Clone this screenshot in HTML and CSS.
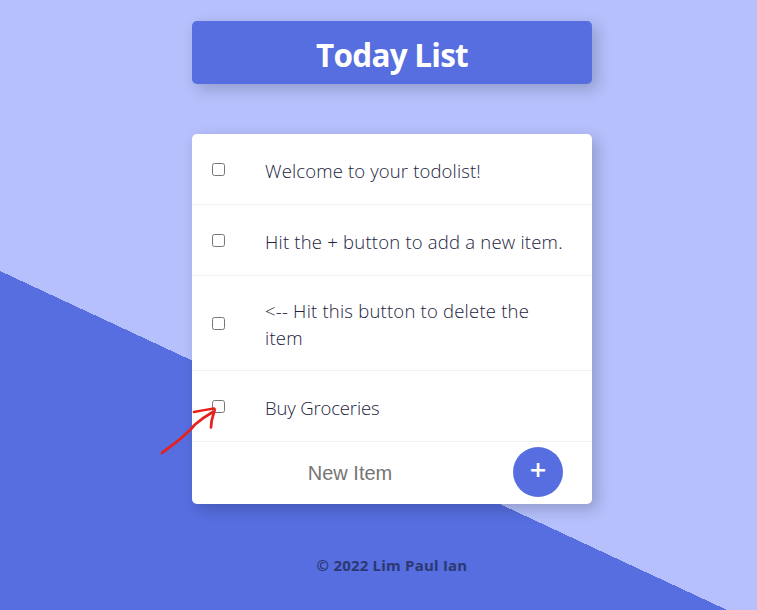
FILE: index.html
```html
<!DOCTYPE html>
<html lang="en">
<head>
<meta charset="utf-8">
<title>Today List</title>
<link rel="stylesheet" href="styles.css">
</head>
<body>
<header class="box heading"><h1>Today List</h1></header>
<main class="box list">
  <div class="item"><input type="checkbox"><p class="welcome">Welcome to your todolist!</p></div>
  <div class="item"><input type="checkbox"><p>Hit the + button to add a new item.</p></div>
  <div class="item tall"><input type="checkbox"><p>&lt;-- Hit this button to delete the<br>item</p></div>
  <div class="item"><input type="checkbox"><p class="short">Buy Groceries</p>
    <svg class="arrow" width="60" height="54" viewBox="0 0 60 54" fill="none" stroke="#e8201c" stroke-width="2.7" stroke-linecap="round" stroke-linejoin="round"><path d="M4 50C11 44 19 39.500 26 32.500Q29 30 33 26L37 21.500Q46 14 54 9.500M36 9Q46 7 56 5.500Q57.500 6 55.500 11Q53 18 53 24.500"/></svg>
  </div>
  <form class="new-item">
    <input class="field" type="text" placeholder="New Item" autocomplete="off">
    <button class="add" type="button" aria-label="Add"><span>+</span></button>
  </form>
</main>
<footer>© 2022 Lim Paul Ian</footer>
</body>
</html>
```
FILE: styles.css
```css
* { box-sizing: border-box; }
html { height: 100%; overflow: hidden; }
body {
  margin: 0;
  height: 610px;
  padding: 21px 0 0 27px;
  overflow: hidden;
  background: linear-gradient(205deg, #b5c0fc 565.5px, #566ee0 565.5px);
  font-family: "Open Sans", sans-serif;
}
.box {
  width: 400px;
  margin: 0 auto;
  border-radius: 5px;
  box-shadow: 5px 5px 15px rgba(0, 0, 0, .2);
}
.heading {
  height: 63px;
  background: #566ee0;
  color: #fff;
  text-align: center;
}
h1 {
  margin: 0;
  font-size: 31.5px;
  line-height: 67px;
  font-weight: 700;
  letter-spacing: -.75px;
}
.list {
  margin-top: 50px;
  height: 370px;
  background: #fff;
}
.item {
  position: relative;
  display: flex;
  align-items: center;
  height: 71px;
  padding-left: 20px;
  border-bottom: 1px solid #f1f1f1;
}
.item.tall { height: 95px; }
.item input { width: 13px; height: 13px; margin: 0 40px 0 0; }
.item p {
  margin: 2px 0 0;
  color: #1c2340;
  font-size: 18.5px;
  font-weight: 300;
  line-height: 27px;
  letter-spacing: .21px;
  white-space: nowrap;
}
.item .welcome { letter-spacing: .14px; }
.item .short { letter-spacing: -.15px; }
.arrow {
  position: absolute;
  left: -34px;
  top: 32px;
}
.new-item {
  display: flex;
  align-items: center;
  height: 62px;
  padding: 0 29px 2px 0;
}
.field {
  width: 316px;
  height: 60px;
  margin-right: 5px;
  padding: 3px 0 0;
  border: 0;
  background: transparent;
  outline: none;
  text-align: center;
  font: 20px "Liberation Sans", Arial, sans-serif;
}
.field::placeholder { color: #757575; }
.add {
  width: 50px;
  height: 50px;
  padding: 0 0 7px;
  border: 0;
  border-radius: 50%;
  background: #566ee0;
  color: #fff;
  font: 600 29px/1 "Open Sans", sans-serif;
}
footer {
  margin-top: 49px;
  text-align: center;
  color: #2c3872;
  font-size: 15px;
  font-weight: 700;
  line-height: 24px;
  letter-spacing: .2px;
}
```
